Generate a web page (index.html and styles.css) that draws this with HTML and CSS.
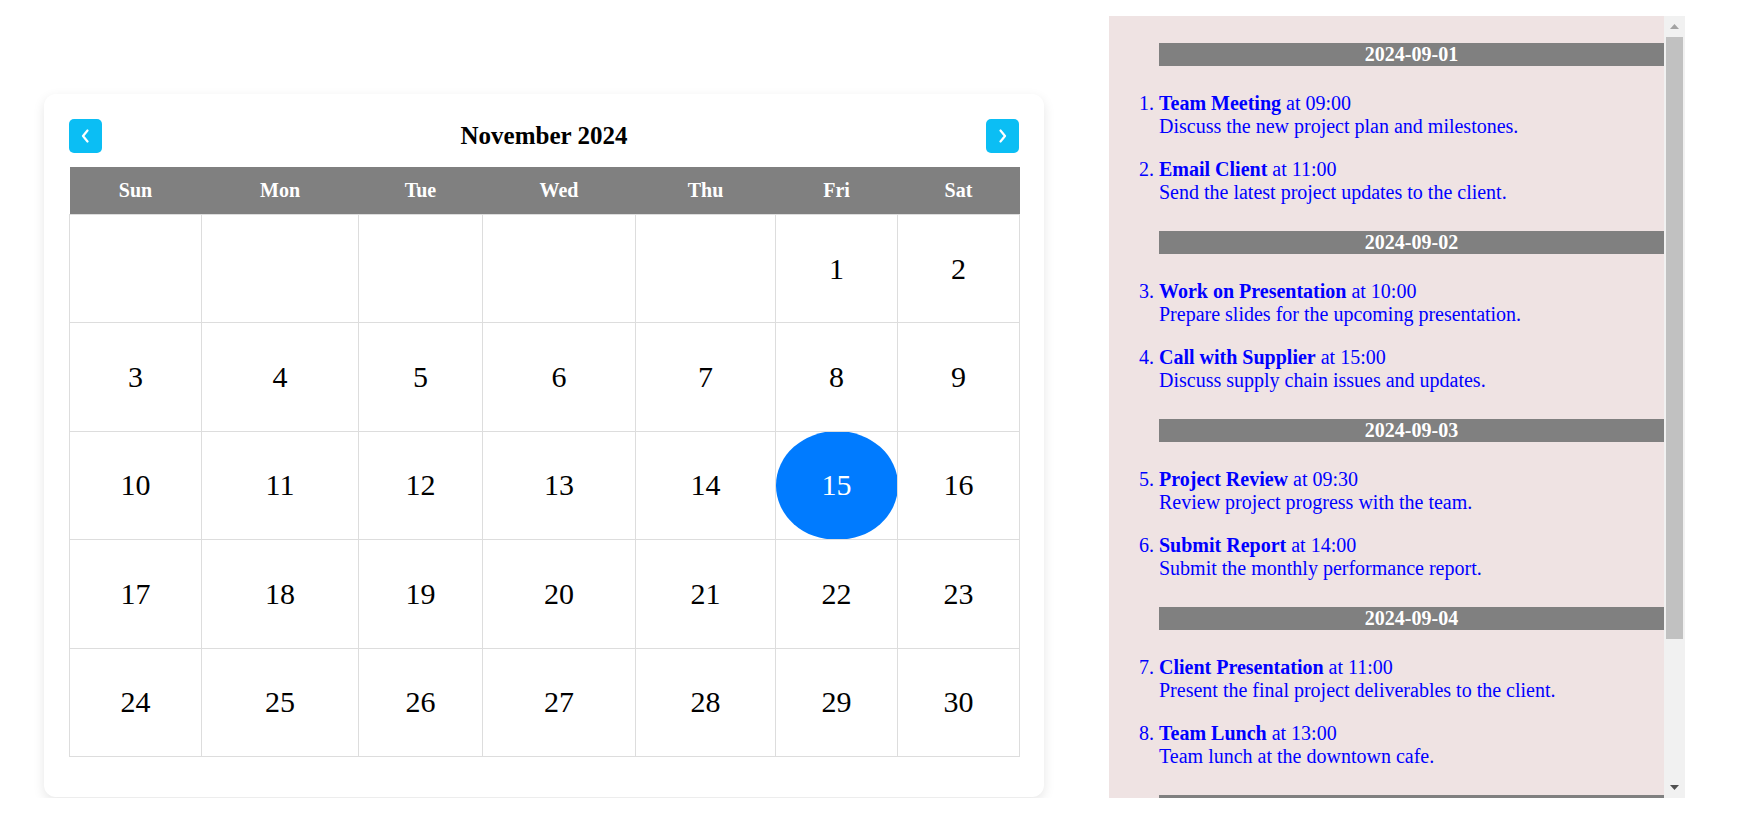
FILE: index.html
```html
<!DOCTYPE html>
<html lang="en">
<head>
<meta charset="utf-8">
<title>Calendar</title>
<link rel="stylesheet" href="styles.css">
</head>
<body>
<div class="page">
  <div class="calendar">
    <div class="cal-head">
      <button class="nav-btn" aria-label="Previous month">
        <svg width="9" height="14" viewBox="0 0 9 14"><polyline points="6.5,1.5 2,7 6.5,12.5" fill="none" stroke="#fff" stroke-width="2.2" stroke-linecap="round" stroke-linejoin="round"/></svg>
      </button>
      <h2 class="cal-title">November 2024</h2>
      <button class="nav-btn" aria-label="Next month">
        <svg width="9" height="14" viewBox="0 0 9 14"><polyline points="2.5,1.5 7,7 2.5,12.5" fill="none" stroke="#fff" stroke-width="2.2" stroke-linecap="round" stroke-linejoin="round"/></svg>
      </button>
    </div>
    <table class="cal-table">
      <colgroup>
        <col class="c-sun"><col class="c-mon"><col class="c-tue"><col class="c-wed"><col class="c-thu"><col class="c-fri"><col class="c-sat">
      </colgroup>
      <thead>
        <tr><th>Sun</th><th>Mon</th><th>Tue</th><th>Wed</th><th>Thu</th><th>Fri</th><th>Sat</th></tr>
      </thead>
      <tbody>
        <tr><td></td><td></td><td></td><td></td><td></td><td>1</td><td>2</td></tr>
        <tr><td>3</td><td>4</td><td>5</td><td>6</td><td>7</td><td>8</td><td>9</td></tr>
        <tr><td>10</td><td>11</td><td>12</td><td>13</td><td>14</td><td class="today">15</td><td>16</td></tr>
        <tr><td>17</td><td>18</td><td>19</td><td>20</td><td>21</td><td>22</td><td>23</td></tr>
        <tr><td>24</td><td>25</td><td>26</td><td>27</td><td>28</td><td>29</td><td>30</td></tr>
      </tbody>
    </table>
  </div>

  <div class="schedule-panel">
    <div class="schedule">
      <section class="day">
        <h3 class="day-title">2024-09-01</h3>
        <ol class="events" start="1">
          <li class="event"><strong>Team Meeting</strong> at 09:00<span class="desc">Discuss the new project plan and milestones.</span></li>
          <li class="event"><strong>Email Client</strong> at 11:00<span class="desc">Send the latest project updates to the client.</span></li>
        </ol>
      </section>
      <section class="day">
        <h3 class="day-title">2024-09-02</h3>
        <ol class="events" start="3">
          <li class="event"><strong>Work on Presentation</strong> at 10:00<span class="desc">Prepare slides for the upcoming presentation.</span></li>
          <li class="event"><strong>Call with Supplier</strong> at 15:00<span class="desc">Discuss supply chain issues and updates.</span></li>
        </ol>
      </section>
      <section class="day">
        <h3 class="day-title">2024-09-03</h3>
        <ol class="events" start="5">
          <li class="event"><strong>Project Review</strong> at 09:30<span class="desc">Review project progress with the team.</span></li>
          <li class="event"><strong>Submit Report</strong> at 14:00<span class="desc">Submit the monthly performance report.</span></li>
        </ol>
      </section>
      <section class="day">
        <h3 class="day-title">2024-09-04</h3>
        <ol class="events" start="7">
          <li class="event"><strong>Client Presentation</strong> at 11:00<span class="desc">Present the final project deliverables to the client.</span></li>
          <li class="event"><strong>Team Lunch</strong> at 13:00<span class="desc">Team lunch at the downtown cafe.</span></li>
        </ol>
      </section>
      <section class="day">
        <h3 class="day-title">2024-09-05</h3>
        <ol class="events" start="9">
          <li class="event"><strong>Code Review</strong> at 10:00<span class="desc">Review the latest code changes with the team.</span></li>
          <li class="event"><strong>Sprint Planning</strong> at 16:00<span class="desc">Plan the tasks for the next sprint.</span></li>
        </ol>
      </section>
    </div>
    <div class="scrollbar" aria-hidden="true">
      <div class="sb-btn">
        <svg width="9" height="5" viewBox="0 0 9 5"><polygon points="0,5 4.5,0 9,5" fill="#a3a3a3"/></svg>
      </div>
      <div class="sb-track">
        <div class="sb-thumb"></div>
      </div>
      <div class="sb-btn">
        <svg width="9" height="5" viewBox="0 0 9 5"><polygon points="0,0 9,0 4.5,5" fill="#505050"/></svg>
      </div>
    </div>
  </div>
</div>
</body>
</html>
```

FILE: styles.css
```css
html, body {
  margin: 0;
  padding: 0;
  background: #ffffff;
}

body {
  font-family: "Liberation Serif", "Times New Roman", serif;
  color: #000;
}

.page {
  display: flex;
  align-items: flex-start;
}

/* ---------- Calendar card ---------- */
.calendar {
  box-sizing: border-box;
  width: 1000px;
  margin: 94px 0 0 44px;
  padding: 25px 25px 40px 25px;
  background: #fff;
  border-radius: 12px;
  box-shadow: 0 4px 12px rgba(0, 0, 0, 0.1);
}

.cal-head {
  display: flex;
  justify-content: space-between;
  align-items: center;
  height: 34px;
  margin-bottom: 14px;
}

.nav-btn {
  display: flex;
  align-items: center;
  justify-content: center;
  width: 33px;
  height: 34px;
  padding: 0;
  border: none;
  border-radius: 5px;
  background: #0bbef4;
  cursor: pointer;
}

.cal-title {
  margin: 0;
  font-size: 25px;
  font-weight: bold;
}

.cal-table {
  width: 100%;
  border-collapse: collapse;
  table-layout: fixed;
}

.c-sun { width: 132px; }
.c-mon { width: 157px; }
.c-tue { width: 124px; }
.c-wed { width: 153px; }
.c-thu { width: 140px; }
.c-fri { width: 122px; }
.c-sat { width: 122px; }

.cal-table th {
  background: #808080;
  color: #fff;
  font-size: 20px;
  font-weight: bold;
  line-height: 23px;
  padding: 12px 0;
  text-align: center;
  border: none;
}

.cal-table td {
  height: 107.4px;
  padding: 0;
  border: 1px solid #dddddd;
  text-align: center;
  vertical-align: middle;
  font-size: 30px;
}

.cal-table td.today {
  background: #007bff;
  color: #fff;
  border-radius: 50%;
}

/* ---------- Schedule panel ---------- */
.schedule-panel {
  display: flex;
  width: 576px;
  height: 782px;
  margin: 16px 0 0 65px;
  background: #efe3e3;
}

.schedule {
  flex: 1;
  box-sizing: border-box;
  height: 100%;
  padding: 0 0 19px 50px;
  overflow-y: auto;
  scrollbar-width: none;
  color: #0000ff;
  font-size: 20px;
  line-height: 23px;
}

.scrollbar {
  display: flex;
  flex-direction: column;
  width: 21px;
  background: #f1f1f1;
}

.sb-btn {
  display: flex;
  align-items: center;
  justify-content: center;
  height: 21px;
}

.sb-track {
  flex: 1;
}

.sb-thumb {
  height: 602px;
  margin: 0 2px;
  background: #c1c1c1;
}

.day-title {
  margin: 27px 0 26px 0;
  background: #808080;
  color: #fff;
  text-align: center;
  font-size: 20px;
  font-weight: bold;
  line-height: 23px;
}

.events {
  margin: 0;
  padding: 0;
}

.event {
  margin-bottom: 20px;
}

.event:last-child {
  margin-bottom: 0;
}

.desc {
  display: block;
}
```
